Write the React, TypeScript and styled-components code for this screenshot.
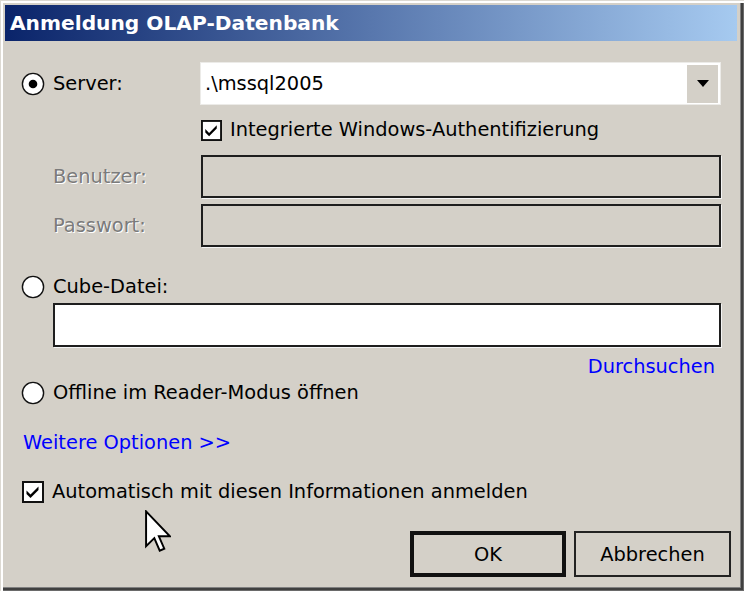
import React from 'react';
import styled, { createGlobalStyle } from 'styled-components';

const GlobalStyle = createGlobalStyle`
  html, body {
    margin: 0;
    padding: 0;
    background: #d4d0c8;
  }
  * {
    box-sizing: border-box;
  }
`;

// Fenster mit klassischem 3D-Rahmen
const Window = styled.div`
  position: relative;
  width: 744px;
  height: 591px;
  background: #d4d0c8;
  padding: 5px 7px 6px 5px;
  display: flex;
  flex-direction: column;
  font-family: 'DejaVu Sans', sans-serif;
  font-size: 19.4px;
  color: #000;
  box-shadow:
    inset 1px 1px 0 #dcd9d2,
    inset 3px 3px 0 #ffffff,
    inset -1px -1px 0 #6a6a6a,
    inset -3px -3px 0 #404040,
    inset -4px -4px 0 #808080;
`;

const TitleBar = styled.div`
  height: 36px;
  display: flex;
  align-items: center;
  padding-left: 5px;
  background: linear-gradient(to right, #0a246a, #a6caf0);
  color: #fff;
  font-weight: bold;
  font-size: 20.2px;
`;

const Body = styled.div`
  flex: 1;
  display: flex;
  flex-direction: column;
  padding: 21px 16px 0 17px;
`;

const FieldRow = styled.div<{ $top?: number; $height?: number }>`
  display: grid;
  grid-template-columns: 179px 1fr;
  align-items: center;
  margin-top: ${p => p.$top ?? 0}px;
  height: ${p => p.$height ?? 43}px;
`;

const OptionRow = styled.div<{ $top?: number; $indent?: number }>`
  display: flex;
  align-items: center;
  gap: 8px;
  height: 22px;
  margin-top: ${p => p.$top ?? 0}px;
  margin-left: ${p => p.$indent ?? 0}px;
  line-height: 1;
  white-space: nowrap;
`;

const Label = styled.span<{ $disabled?: boolean }>`
  line-height: 1;
  padding-left: ${p => (p.$disabled ? 31 : 0)}px;
  color: ${p => (p.$disabled ? '#7b7b7b' : '#000')};
  text-shadow: ${p => (p.$disabled ? '1px 1px 0 #ffffff' : 'none')};
`;

const Combo = styled.div`
  height: 43px;
  margin-left: -1px;
  background: #fff;
  border: 1px solid #ecebe8;
  display: flex;
  align-items: center;
  justify-content: space-between;
  padding: 2px 2px 2px 4px;
`;

const ComboText = styled.span`
  line-height: 1;
`;

const DropButton = styled.div`
  width: 31px;
  height: 38px;
  background: #d4d0c8;
  display: flex;
  align-items: center;
  justify-content: center;
`;

const TextBox = styled.div<{ $disabled?: boolean; $indent?: number; $top?: number }>`
  height: ${p => (p.$indent ? 44 : 43)}px;
  margin-top: ${p => p.$top ?? 0}px;
  margin-left: ${p => p.$indent ?? 0}px;
  background: ${p => (p.$disabled ? '#d4d0c8' : '#ffffff')};
  border: 2px solid #1e1e1e;
  box-shadow: 1px 1px 0 #f4f4f4;
`;

const LinkRow = styled.div<{ $top?: number; $align?: string }>`
  display: flex;
  justify-content: ${p => p.$align ?? 'flex-start'};
  align-items: center;
  height: 22px;
  margin-top: ${p => p.$top ?? 0}px;
  padding-right: ${p => (p.$align === 'flex-end' ? 6 : 0)}px;
  padding-left: ${p => (p.$align === 'flex-end' ? 0 : 1)}px;
`;

const Link = styled.span`
  color: #0000ff;
  line-height: 1;
  cursor: pointer;
`;

const RadioRow = styled(OptionRow)`
  height: 24px;
  margin-left: -1px;
`;

const Footer = styled.div`
  display: flex;
  justify-content: flex-end;
  gap: 8px;
  margin-top: 28px;
  margin-right: -10px;
`;

const Button = styled.button<{ $default?: boolean }>`
  width: ${p => (p.$default ? 156 : 157)}px;
  height: 46px;
  background: #d4d0c8;
  border: ${p => (p.$default ? '4px solid #111' : '2px solid #222')};
  font-family: 'DejaVu Sans', sans-serif;
  font-size: 19.4px;
  color: #000;
  padding: 0;
`;

const Cursor = styled.svg`
  position: absolute;
  left: 145px;
  top: 510px;
`;

const Radio = ({ checked }: { checked?: boolean }) => (
  <svg width="24" height="24" viewBox="0 0 24 24">
    <circle cx="12" cy="12" r="10.6" fill="#fff" stroke="#111" strokeWidth="1.4" />
    {checked && <circle cx="12" cy="12" r="4.3" fill="#000" />}
  </svg>
);

const Check = ({ size = 22 }: { size?: number }) => (
  <svg width={size} height={size} viewBox="0 0 22 22">
    <rect x="1" y="1" width="20" height="20" fill="#fff" stroke="#111" strokeWidth="2" />
    <path d="M4.5 9.5 L8.5 13.5 L8.5 17 L4.5 13 Z M8.5 13.5 L16.5 5.5 L16.5 9 L8.5 17 Z" fill="#000" />
  </svg>
);

const App: React.FC = () => (
  <>
    <GlobalStyle />
    <Window>
      <TitleBar>Anmeldung OLAP-Datenbank</TitleBar>
      <Body>
        <FieldRow>
          <RadioRow>
            <Radio checked />
            <span>Server:</span>
          </RadioRow>
          <Combo>
            <ComboText>.\mssql2005</ComboText>
            <DropButton>
              <svg width="12" height="7" viewBox="0 0 12 7">
                <path d="M0 0 H12 L6 7 Z" fill="#000" />
              </svg>
            </DropButton>
          </Combo>
        </FieldRow>

        <OptionRow $top={14} $indent={179}>
          <Check size={21} />
          <span>Integrierte Windows-Authentifizierung</span>
        </OptionRow>

        <FieldRow $top={14}>
          <Label $disabled>Benutzer:</Label>
          <TextBox $disabled />
        </FieldRow>
        <FieldRow $top={6}>
          <Label $disabled>Passwort:</Label>
          <TextBox $disabled />
        </FieldRow>

        <RadioRow $top={28}>
          <Radio />
          <span>Cube-Datei:</span>
        </RadioRow>
        <TextBox $indent={31} $top={4} />
        <LinkRow $top={9} $align="flex-end">
          <Link>Durchsuchen</Link>
        </LinkRow>

        <RadioRow $top={3}>
          <Radio />
          <span>Offline im Reader-Modus öffnen</span>
        </RadioRow>

        <LinkRow $top={27}>
          <Link>Weitere Optionen &gt;&gt;</Link>
        </LinkRow>

        <OptionRow $top={27}>
          <Check />
          <span>Automatisch mit diesen Informationen anmelden</span>
        </OptionRow>

        <Footer>
          <Button $default>OK</Button>
          <Button>Abbrechen</Button>
        </Footer>
      </Body>

      <Cursor width="26" height="44" viewBox="0 0 12 20">
        <path
          d="M0.5 0.5 L0.5 16.5 L4.3 12.8 L6.8 18.6 L8.9 17.7 L6.4 12 L11.5 12 Z"
          fill="#fff"
          stroke="#000"
          strokeWidth="0.9"
          strokeLinejoin="miter"
        />
      </Cursor>
    </Window>
  </>
);

export default App;
